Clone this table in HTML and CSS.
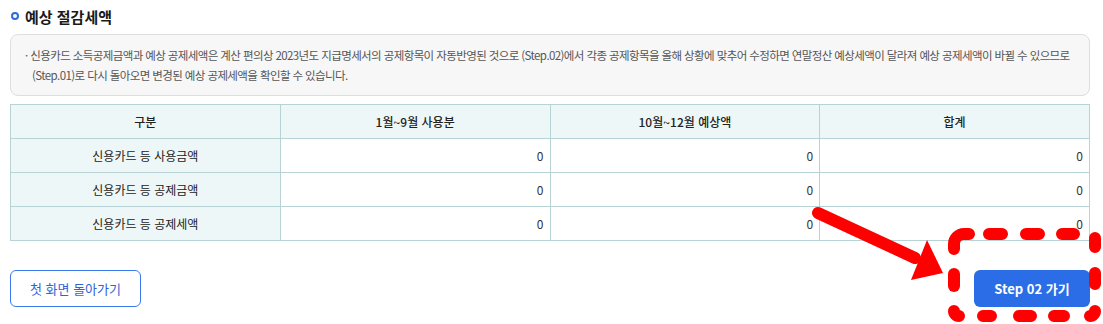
FILE: index.html
```html
<!DOCTYPE html>
<html lang="ko">
<head>
  <meta charset="UTF-8">
  <meta name="viewport" content="width=device-width, initial-scale=1.0">
  <title>예상 절감세액</title>
  <link rel="stylesheet" href="styles.css">
</head>
<body>
  <div class="page">
    <h2 class="section-title"><span class="dot"></span>예상 절감세액</h2>

    <div class="notice">
      <p>· 신용카드 소득공제금액과 예상 공제세액은 계산 편의상 2023년도 지급명세서의 공제항목이 자동반영된 것으로 (Step.02)에서 각종 공제항목을 올해 상황에 맞추어 수정하면 연말정산 예상세액이 달라져 예상 공제세액이 바뀔 수 있으므로 (Step.01)로 다시 돌아오면 변경된 예상 공제세액을 확인할 수 있습니다.</p>
    </div>

    <table class="result">
      <thead>
        <tr>
          <th>구분</th>
          <th>1월~9월 사용분</th>
          <th>10월~12월 예상액</th>
          <th>합계</th>
        </tr>
      </thead>
      <tbody>
        <tr>
          <th>신용카드 등 사용금액</th>
          <td>0</td>
          <td>0</td>
          <td>0</td>
        </tr>
        <tr>
          <th>신용카드 등 공제금액</th>
          <td>0</td>
          <td>0</td>
          <td>0</td>
        </tr>
        <tr>
          <th>신용카드 등 공제세액</th>
          <td>0</td>
          <td>0</td>
          <td>0</td>
        </tr>
      </tbody>
    </table>

    <div class="actions">
      <button class="btn btn-line">첫 화면 돌아가기</button>
      <button class="btn btn-primary">Step 02 가기</button>
    </div>
  </div>

  <!-- red marker pointing at the next step button -->
  <svg class="marker" width="1103" height="324" viewBox="0 0 1103 324">
    <g stroke="#ff0000" stroke-width="12" stroke-linecap="round" fill="none">
      <line x1="818" y1="213" x2="915" y2="258"/>
      <!-- dashed frame, one segment per dash -->
      <path d="M954 249 V244 A10 10 0 0 1 964 234 H969"/>
      <path d="M989 234 H1002 M1026 234 H1039 M1062 234 H1074"/>
      <path d="M1095 238 V247 M1095 273 V284"/>
      <path d="M1095 311 A5 5 0 0 1 1090 316"/>
      <path d="M983 316 H991 M1019 316 H1031 M1054 316 H1064"/>
      <path d="M954 311 A5 5 0 0 0 959 316"/>
      <path d="M954 274 V286"/>
    </g>
    <polygon points="927,240 943,273 911,280" fill="#ff0000"/>
  </svg>
</body>
</html>
```

FILE: styles.css
```css
body {
  margin: 0;
  font-family: "Noto Sans CJK KR", "Noto Sans", sans-serif;
  color: #222;
  background: #fff;
  overflow: hidden;
}

.page {
  width: 1080px;
  padding: 0 10px;
}

.section-title {
  display: flex;
  align-items: center;
  gap: 6px;
  margin: 0;
  height: 34px;
  padding-bottom: 2px;
  font-size: 15px;
  font-weight: 700;
  color: #1a1a1a;
  box-sizing: border-box;
}

.section-title .dot {
  width: 4px;
  height: 4px;
  border: 2px solid #2b6de0;
  border-radius: 50%;
  margin-left: 1px;
}

.notice {
  background: #f7f7f7;
  border: 1px solid #dedede;
  border-radius: 8px;
  padding: 10px 12px 10px 14px;
}

.notice p {
  margin: 0;
  font-size: 11.5px;
  line-height: 20px;
  letter-spacing: -0.6px;
  word-break: keep-all;
  color: #555;
  padding-left: 7px;
  text-indent: -7px;
}

.result {
  width: 100%;
  margin-top: 8px;
  border-collapse: collapse;
  table-layout: fixed;
  font-size: 12px;
}

.result th,
.result td {
  border: 1px solid #b7d3d6;
  height: 33px;
  padding: 0 6px;
}

.result th {
  background: #eef7f7;
  font-weight: 500;
  color: #222;
  text-align: center;
}

.result tbody th {
  font-weight: 400;
}

.result td {
  text-align: right;
  color: #333;
  background: #fff;
}

.actions {
  display: flex;
  justify-content: space-between;
  margin-top: 29px;
}

.btn {
  height: 37px;
  border-radius: 6px;
  font-family: inherit;
  font-size: 13px;
  cursor: pointer;
}

.btn-line {
  width: 131px;
  background: #fff;
  border: 1px solid #3a78ef;
  color: #2f63d6;
}

.btn-primary {
  width: 116px;
  background: #2a6de6;
  border: none;
  color: #fff;
  font-weight: 700;
}

.marker {
  position: absolute;
  left: 0;
  top: 0;
  pointer-events: none;
}
```
